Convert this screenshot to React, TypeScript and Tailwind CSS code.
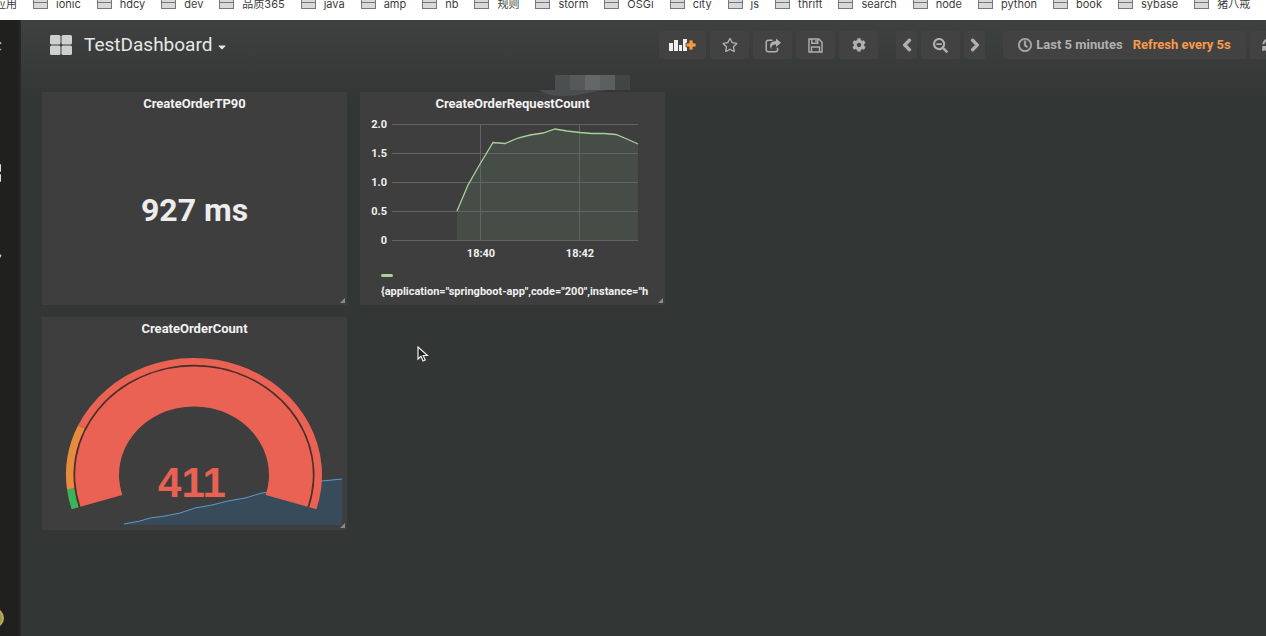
import React from "react";
import {
  FaCaretDown,
  FaChevronLeft,
  FaChevronRight,
  FaCog,
  FaRegClock,
  FaRegStar,
  FaSearchMinus,
  FaSyncAlt,
} from "react-icons/fa";

const bookmarks = [
  "ionic",
  "hdcy",
  "dev",
  "品质365",
  "java",
  "amp",
  "nb",
  "规则",
  "storm",
  "OSGi",
  "city",
  "js",
  "thrift",
  "search",
  "node",
  "python",
  "book",
  "sybase",
  "猪八戒",
];

const btnCls =
  "flex h-7 shrink-0 items-center justify-center rounded-xs bg-[#424242] text-[#b0b0b0] hover:text-white";

function FolderIcon() {
  return (
    <svg width="15" height="10" viewBox="0 0 15 10" className="shrink-0">
      <rect x="0.5" y="0.5" width="14" height="9" fill="#d9d9d9" stroke="#777" />
      <path d="M0 3.5h15" stroke="#777" />
      <path d="M0 0.5h15" stroke="#444" />
    </svg>
  );
}

/** Browser bookmark strip, scrolled so only its lower part shows. */
function BookmarkBar() {
  return (
    <nav className="h-5 overflow-hidden bg-white font-['Inter','Noto_Sans_CJK_SC',sans-serif] text-[11px] leading-4 text-[#3c3c3c]">
      <div className="-ml-[5px] -mt-1 flex gap-4 whitespace-nowrap">
        <a href="#apps" className="shrink-0">
          应用
        </a>
        {bookmarks.map((name) => (
          <a key={name} href={"#" + name} className="flex shrink-0 items-center gap-2">
            <FolderIcon />
            {name}
          </a>
        ))}
      </div>
    </nav>
  );
}

function Sidebar() {
  return (
    <aside className="flex w-[21px] shrink-0 flex-col bg-linear-to-r from-[#20201f] from-85% to-[#2a2a2a]">
      <svg width="6" height="14" viewBox="0 0 6 14" className="mt-5">
        <path d="M0 2l1 2M0 10l1-1" stroke="#aaa" strokeWidth="1.5" />
      </svg>
      <svg width="6" height="20" viewBox="0 0 6 20" className="mt-[109px]">
        <rect x="-6" y="1" width="7" height="8" rx="1" fill="#ddd" />
        <rect x="-6" y="11" width="7" height="8" rx="1" fill="#ddd" />
      </svg>
      <svg width="6" height="8" viewBox="0 0 6 8" className="mt-[69px]">
        <path d="M0 2l1.500 1.500L0 6z" fill="#ccc" />
      </svg>
      <svg width="6" height="20" viewBox="0 0 6 20" className="mb-2 mt-auto">
        <circle cx="-6" cy="10" r="9" fill="#6fae62" stroke="#d8a04a" strokeWidth="2" />
      </svg>
    </aside>
  );
}

function AddPanelIcon() {
  return (
    <svg width="27" height="16" viewBox="0 0 27 16">
      <path d="M0 6h4v8H0zM5 3h4v11H5zM10 8h3v6h-3zM14 2h4v12h-4z" fill="#efefef" />
      <path d="M20 3h4v3h3v4h-3v3h-4v-3h-3V6h3z" fill="#f79a3c" stroke="#424242" strokeWidth="0.800" />
    </svg>
  );
}

function ShareIcon() {
  return (
    <svg width="16" height="15" viewBox="0 0 16 15" fill="none">
      <path
        d="M7.500 2.200H3.500A2.300 2.300 0 0 0 1.200 4.500v7A2.300 2.300 0 0 0 3.500 13.800h6.800a2.300 2.300 0 0 0 2.300-2.300V9.800"
        stroke="currentColor"
        strokeWidth="1.500"
      />
      <path
        d="M11 0.500l5 4.200-5 4.200V6.500C7.800 6.400 6.200 7.500 6.500 11 3.600 7.600 5.200 3 11 2.900z"
        fill="currentColor"
      />
    </svg>
  );
}

function SaveIcon() {
  return (
    <svg width="15" height="15" viewBox="0 0 15 15" fill="none" stroke="currentColor" strokeWidth="1.400">
      <path d="M1 1h9.800L14 4.200V14H1z" />
      <path d="M3.800 1v4.300h6V1M3.500 14V9h8v5" />
      <path d="M8 2v2.300" />
    </svg>
  );
}

function Toolbar() {
  return (
    <header className="-mr-8 flex h-[50px] items-center overflow-hidden pl-[29px]">
      <button type="button" className="flex items-center gap-3 text-[#e6e6e6]">
        <svg width="22" height="20" viewBox="0 0 22 20" fill="#cfcfcf">
          <rect x="0" y="0" width="10.500" height="9.500" rx="1.500" />
          <rect x="11.500" y="0" width="10.500" height="9.500" rx="1.500" />
          <rect x="0" y="10.500" width="10.500" height="9.500" rx="1.500" />
          <rect x="11.500" y="10.500" width="10.500" height="9.500" rx="1.500" />
        </svg>
        <span className="flex items-center gap-1 text-[19px] leading-6">
          TestDashboard
          <FaCaretDown className="mt-1 size-3" />
        </span>
      </button>

      <div className="ml-auto flex gap-1">
        <button type="button" aria-label="Add panel" className={btnCls + " w-[47px]"}>
          <AddPanelIcon />
        </button>
        <button type="button" aria-label="Star" className={btnCls + " w-[39px]"}>
          <FaRegStar className="size-4" />
        </button>
        <button type="button" aria-label="Share" className={btnCls + " w-[39px]"}>
          <ShareIcon />
        </button>
        <button type="button" aria-label="Save" className={btnCls + " w-[39px]"}>
          <SaveIcon />
        </button>
        <button type="button" aria-label="Settings" className={btnCls + " w-[39px]"}>
          <FaCog className="size-3.5" />
        </button>
      </div>

      <div className="ml-[18px] flex gap-1">
        <button type="button" aria-label="Back" className={btnCls + " w-[21px]"}>
          <FaChevronLeft className="size-3.5 stroke-current stroke-[40px]" />
        </button>
        <button type="button" aria-label="Zoom out" className={btnCls + " w-[39px]"}>
          <FaSearchMinus className="size-[15px]" />
        </button>
        <button type="button" aria-label="Forward" className={btnCls + " w-[21px]"}>
          <FaChevronRight className="size-3.5 stroke-current stroke-[40px]" />
        </button>
      </div>

      <div className="ml-[18px] flex gap-1">
        <button type="button" className={btnCls + " w-[243px] text-[13px] font-bold"}>
          <FaRegClock className="mr-1 size-3.5 stroke-current stroke-[20px]" />
          Last 5 minutes
          <span className="ml-2.5 text-[#f79a4b]">Refresh every 5s</span>
        </button>
        <button type="button" aria-label="Refresh" className={btnCls + " w-12 justify-start pl-3"}>
          <FaSyncAlt className="size-3.5" />
        </button>
      </div>
    </header>
  );
}

function Panel({
  title,
  className = "",
  children,
}: {
  title: string;
  className?: string;
  children: React.ReactNode;
}) {
  return (
    <section className={"relative flex min-h-[213px] flex-col bg-[#3e3e3e] " + className}>
      <h2 className="pt-0.5 text-center text-[13px] leading-5 font-bold text-[#f2f2f2]">{title}</h2>
      {children}
      {/* resize handle */}
      <svg width="5" height="5" viewBox="0 0 5 5" className="absolute bottom-0.5 right-0.5">
        <path d="M5 0v5H0z" fill="#8a8a8a" />
      </svg>
    </section>
  );
}

const yTicks = [
  { label: "2.0", y: 10 },
  { label: "1.5", y: 39 },
  { label: "1.0", y: 68 },
  { label: "0.5", y: 97 },
  { label: "0", y: 126 },
];
const xTicks = [
  { label: "18:40", x: 120 },
  { label: "18:42", x: 219 },
];
const requests =
  "97,97 108,71 120,50 133,28.500 145,29.500 158,24 170,21 183,19 195,15 207,17 220,18.500 232,19.500 244,19.500 256,20.500 267,25 278,30";

function RequestChart() {
  return (
    <svg viewBox="0 0 305 150" className="w-full">
      <polygon points={"97,126 " + requests + " 278,126"} fill="#7eb27d" fillOpacity="0.13" />
      <g stroke="#626362" strokeWidth="1">
        {yTicks.map((t) => (
          <line key={t.label} x1="32" x2="278" y1={t.y + 0.5} y2={t.y + 0.5} />
        ))}
        {xTicks.map((t) => (
          <line key={t.label} x1={t.x + 0.5} x2={t.x + 0.5} y1="10" y2="126" />
        ))}
      </g>
      <polyline points={requests} fill="none" stroke="#a9d09c" strokeWidth="1.300" />
      <g fill="#f0f0f0" fontSize="11" fontWeight="700">
        {yTicks.map((t) => (
          <text key={t.label} x="27" y={t.y + 4} textAnchor="end">
            {t.label}
          </text>
        ))}
        {xTicks.map((t) => (
          <text key={t.label} x={t.x + 1} y="143" textAnchor="middle">
            {t.label}
          </text>
        ))}
      </g>
    </svg>
  );
}

const CX = 152;
const CY = 134;
const RATIO = 117 / 128;

/** Point on the gauge, angle in degrees: 0 is right, 180 is left, over the top. */
function at(r: number, deg: number) {
  const a = (deg * Math.PI) / 180;
  return `${CX + r * Math.cos(a)} ${CY - r * RATIO * Math.sin(a)}`;
}

function band(inner: number, outer: number, from: number, to: number) {
  const large = from - to > 180 ? 1 : 0;
  return (
    `M${at(outer, from)}A${outer} ${outer * RATIO} 0 ${large} 1 ${at(outer, to)}` +
    `L${at(inner, to)}A${inner} ${inner * RATIO} 0 ${large} 0 ${at(inner, from)}Z`
  );
}

function CountGauge() {
  const trend =
    "82,183 98,180 108,177 123,175 138,172 153,167 170,164 186,160 203,157 220,152 240,149 260,144 280,140 300,138";
  return (
    <svg viewBox="0 0 305 188" className="mt-0.5 w-full">
      <polygon points={"82,184 " + trend + " 300,184"} fill="#384b5b" />
      <polyline points={trend} fill="none" stroke="#5b9bc8" strokeWidth="1" />
      <path d={band(118, 121, 197, -17)} fill="#4a2f2a" />
      <path d={band(75, 118.8, 197, -17)} fill="#ea6253" />
      <path d={band(120.5, 128, 197, 187)} fill="#3bb35a" />
      <path d={band(120.5, 128, 187, 155)} fill="#e98b3f" />
      <path d={band(120.5, 128, 155, -17)} fill="#ea6253" />
      <text
        x="150"
        y="156"
        textAnchor="middle"
        fontSize="42"
        fontWeight="700"
        fill="#e86152"
        className="font-['Liberation_Sans',sans-serif]"
      >
        411
      </text>
    </svg>
  );
}

/** Pixelated patch that hides whatever stood above the chart, plus its smudge. */
function Mosaic() {
  return (
    <svg width="92" height="24" viewBox="0 0 92 24" className="absolute -top-[18px] left-[179px]">
      <rect x="16" y="1" width="15" height="15" fill="#4c4f4f" />
      <rect x="31" y="1" width="15" height="15" fill="#565959" />
      <rect x="46" y="1" width="15" height="15" fill="#646767" />
      <rect x="61" y="1" width="15" height="15" fill="#5c5f5f" />
      <rect x="76" y="1" width="15" height="15" fill="#414545" />
      <path d="M0 16h68c-14 1-26 6-42 6C14 22 8 21 0 16z" fill="#4b4e4e" />
    </svg>
  );
}

function Cursor() {
  return (
    <svg width="12" height="17" viewBox="0 0 12 17" className="absolute left-[396px] top-[326px]">
      <path
        d="M1 1v12l3-2.800 2 4.800 2.200-1-2-4.500H10.500z"
        fill="#222"
        stroke="#eee"
        strokeWidth="1.200"
      />
    </svg>
  );
}

export default function App() {
  return (
    <div className="flex min-h-screen flex-col overflow-x-hidden bg-[#323635] font-['Roboto',sans-serif]">
      <BookmarkBar />
      <div className="flex flex-1">
        <Sidebar />
        <div className="relative min-w-0 flex-1 overflow-hidden bg-linear-to-b from-[#3e4140] to-[#323635] to-[80px]">
          <Toolbar />
          <main className="-mr-[35px] mt-[22px] grid grid-cols-4 gap-x-[13px] gap-y-3 pl-[21px]">
            <Panel title="CreateOrderTP90">
              <p className="flex flex-1 items-center justify-center text-[32px] font-bold text-[#ededed]">
                927 ms
              </p>
            </Panel>
            <Panel title="CreateOrderRequestCount">
              <Mosaic />
              <RequestChart />
              <div className="pl-[21px] pr-3 pt-2.5">
                <div className="h-[3px] w-3 rounded-xs bg-[#a5d39a]" />
                <div className="mt-[7px] overflow-hidden whitespace-nowrap text-[11px] leading-4 font-bold text-[#f0f0f0]">
                  {'{application="springboot-app",code="200",instance="h'}
                </div>
              </div>
            </Panel>
            <Panel title="CreateOrderCount" className="col-start-1">
              <CountGauge />
            </Panel>
          </main>
          <Cursor />
        </div>
      </div>
    </div>
  );
}
